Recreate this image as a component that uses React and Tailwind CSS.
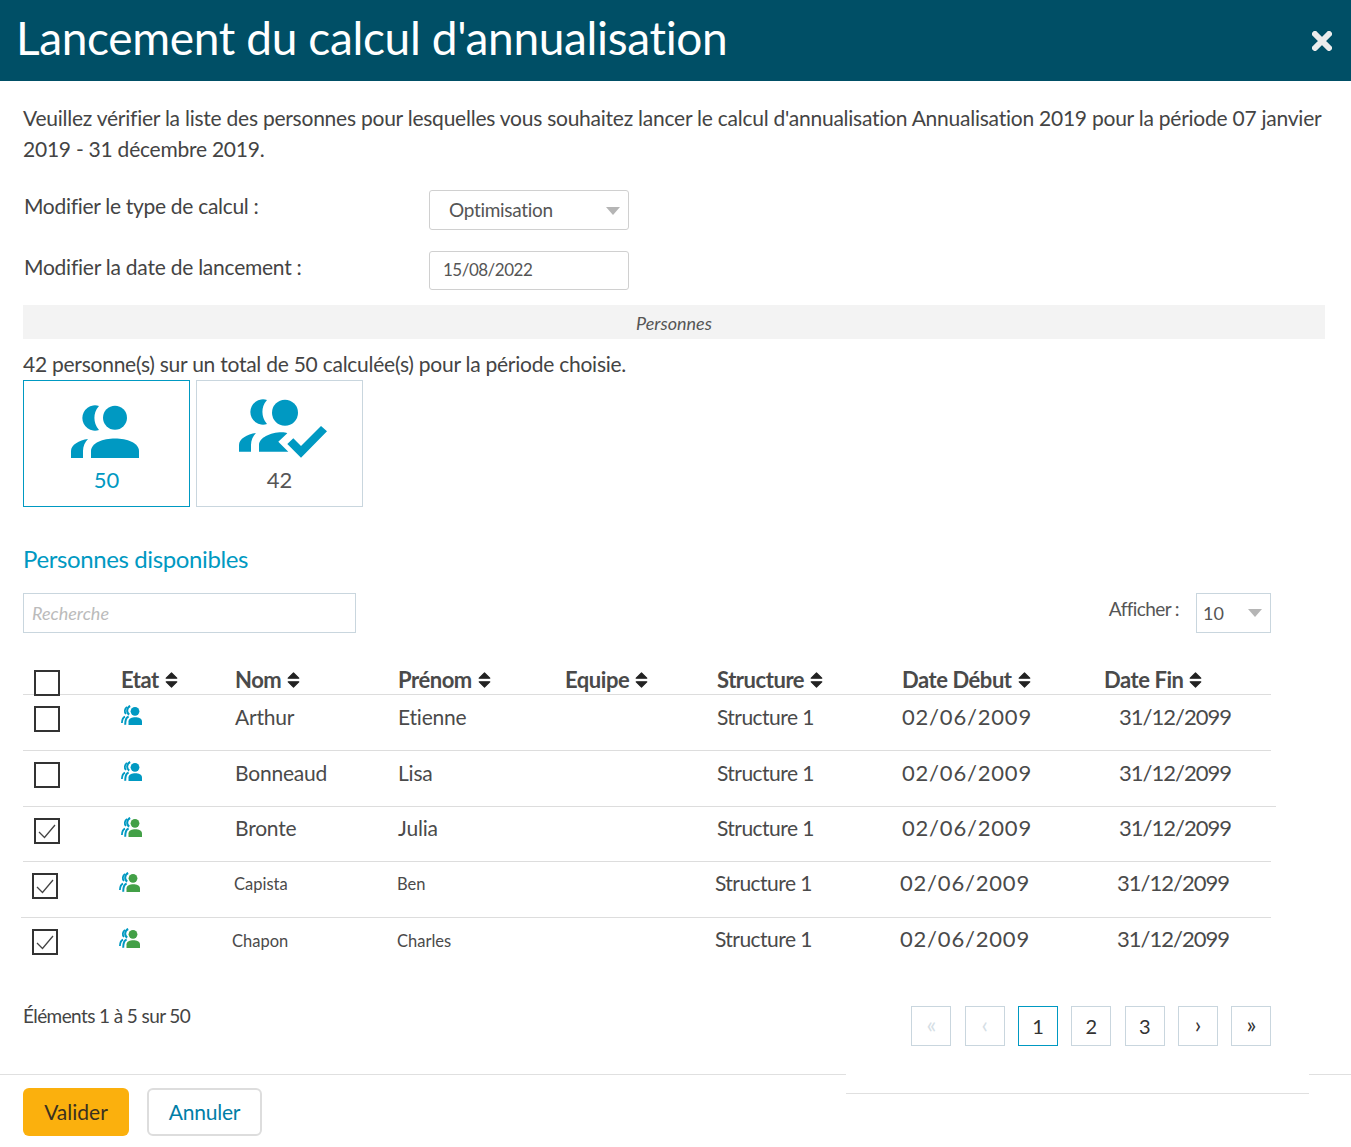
import React from "react";

const Sort = () => (
  <svg width="13" height="16" viewBox="0 0 13 16" className="ml-[6px] shrink-0">
    <path d="M1.2 6.2 L6.5 1 L11.8 6.2 Z M1.2 9.8 L6.5 15 L11.8 9.8 Z" fill="#222" stroke="#222" strokeWidth="1.2" strokeLinejoin="round" />
  </svg>
);

const Arrow = () => (
  <svg width="16" height="10" viewBox="0 0 16 10" className="shrink-0">
    <path d="M1 1 H15 L8 9 Z" fill="#b5b5b5" />
  </svg>
);

const Crescent = () => <path d="M28 1 A12.65 12.65 0 1 0 28 25 A18 18 0 0 1 28 1 Z" fill="#0099c2" />;

const PeopleIcon = () => (
  <svg width="68" height="54" viewBox="0 0 68 54" fill="#0099c2">
    <Crescent />
    <circle cx="44" cy="12.7" r="12" />
    <path d="M20 53 V46 C20 38 32 33.5 44 33.5 S68 38 68 46 V53 Z" />
    <path d="M0 53 V46 C0 40 8 35 17 34 C14 37 12 41 12 46 V53 Z" />
  </svg>
);

const PeopleCheckIcon = () => (
  <svg width="88" height="60" viewBox="0 0 88 60" fill="#0099c2">
    <Crescent />
    <circle cx="46" cy="13.7" r="13" />
    <path d="M20 52.7 V46 C20 39 31 33.3 43 33.3 C45 33.3 47 33.6 48.3 34.3 L39.3 42.7 L49.3 52.7 Z" />
    <path d="M0 52.7 V46 C0 40 8 35 17 34 C14 37 12 41 12 46 V52.7 Z" />
    <path d="M48.3 45 L54.3 39.3 L62 47 L82 27 L88 32.3 L62 58.7 Z" />
  </svg>
);

const StateIcon = ({ color }) => (
  <svg width="21" height="20" viewBox="0 0 21 20" className="shrink-0">
    <path d="M9.2 1 A5 5 0 0 0 8.2 9.6" fill="none" stroke="#0099c2" strokeWidth="2" />
    <path d="M6 2 A4.6 4.6 0 0 0 5 9" fill="none" stroke="#0099c2" strokeWidth="1.8" />
    <path d="M7.6 11.5 C5 12.5 4.2 15.5 4.2 19.8" fill="none" stroke="#0099c2" strokeWidth="2" />
    <path d="M4 11.6 C1.8 12.6 1 15 0.9 18" fill="none" stroke="#0099c2" strokeWidth="1.8" />
    <circle cx="14" cy="6.3" r="4.4" fill={color} />
    <path d="M7.5 20 V16.5 C7.5 13.5 11 12.2 14.3 12.2 S21 13.5 21 16.5 V20 Z" fill={color} />
  </svg>
);

const Check = ({ checked }) => (
  <span className="flex h-[26px] w-[26px] shrink-0 items-center justify-center border-2 border-[#333]">
    {checked && (
      <svg width="20" height="16" viewBox="0 0 20 16">
        <path d="M2 9 L7.5 14.5 L18 2" fill="none" stroke="#444" strokeWidth="1.3" />
      </svg>
    )}
  </span>
);

const cols = "grid grid-cols-[98px_114px_163px_167px_152px_185px_202px_1fr]";

const Head = ({ children }) => (
  <div className="mt-[2px] flex items-center text-[22px] font-bold leading-[28px] tracking-[-0.45px] text-[#4a4a4a]">
    {children}
    <Sort />
  </div>
);

const rows = [
  { nom: "Arthur", pre: "Etienne", color: "#0099c2", pt: "pt-[7px]", small: "", h: "h-[56px]", wrap: "w-[1248px]" },
  { nom: "Bonneaud", pre: "Lisa", color: "#0099c2", pt: "pt-[7px]", small: "", h: "h-[56px]", wrap: "w-[1253px]" },
  { nom: "Bronte", pre: "Julia", color: "#43a047", pt: "pt-[6px]", small: "", checked: true, h: "h-[55px]", wrap: "w-[1248px]" },
  { nom: "Capista", pre: "Ben", color: "#43a047", pt: "pt-[6px]", small: "pt-[8px] text-[16.5px] leading-[28px]", checked: true, h: "h-[56px]", wrap: "w-[1250px] -ml-[2px]", nomClass: "ml-[1px]", preClass: "ml-[1px]" },
  { nom: "Chapon", pre: "Charles", color: "#43a047", pt: "pt-[6px]", small: "pt-[9px] text-[16.5px] leading-[28px]", checked: true, h: "h-[56px]", wrap: "w-[1250px] -ml-[2px]", nomClass: "-ml-[1px]", preClass: "ml-[1px]", last: true },
];

const Row = ({ r }) => {
  const name = r.small || `${r.pt} text-[21px] leading-[30px] tracking-[-0.2px]`;
  return (
    <div className={`${cols} ${r.h} ${r.wrap} ${r.last ? "" : "border-b border-[#dddddd]"} box-border items-start text-[#4a4a4a]`}>
      <div className="pl-[11px] pt-[11px]"><Check checked={r.checked} /></div>
      <div className="pt-[10px]"><StateIcon color={r.color} /></div>
      <div className={`${name} ${r.nomClass || ""}`}>{r.nom}</div>
      <div className={`${name} ${r.preClass || ""}`}>{r.pre}</div>
      <div />
      <div className={`${r.pt} text-[21px] leading-[30px] tracking-[-0.55px]`}>Structure 1</div>
      <div className={`${r.pt} text-[22px] leading-[30px] tracking-[0.8px]`}>02/06/2009</div>
      <div className={`${r.pt} pl-[15px] text-[22px] leading-[30px] tracking-[-1px]`}>31/12/2099</div>
    </div>
  );
};

const Page = ({ children, active, disabled, glyph }) => (
  <span
    className={`flex h-[40px] w-[40px] items-center justify-center border ${glyph ? "pb-[3px] text-[23px]" : "pb-[1px] text-[20px]"} ${
      active ? "border-[#0099c2] text-[#333]" : "border-[#c9d6de] " + (disabled ? "text-[#d5dee5]" : "text-[#333]")
    }`}
  >
    {children}
  </span>
);

export default function App() {
  return (
    <div className="relative h-[1147px] w-[1351px] overflow-hidden bg-white font-['Lato',sans-serif] text-[#444]">
      <header className="flex h-[81px] items-center justify-between bg-[#004f66] pb-[5px] pl-[16px] pr-[19px] text-white">
        <h1 className="text-[46px] font-normal leading-[1] tracking-[-0.35px]">Lancement du calcul d'annualisation</h1>
        <svg width="20" height="20" viewBox="0 0 20 20" className="mt-[5px]">
          <path d="M3 3 L17 17 M17 3 L3 17" stroke="#ececec" strokeWidth="6" strokeLinecap="round" />
        </svg>
      </header>

      <div className="px-[23px]">
        <p className="mt-[21px] w-[1310px] text-[21px] leading-[31px] tracking-[-0.24px] text-[#444]">
          Veuillez vérifier la liste des personnes pour lesquelles vous souhaitez lancer le calcul d'annualisation Annualisation 2019 pour la période 07 janvier 2019 - 31 décembre 2019.
        </p>

        <div className="mt-[26px] flex h-[40px] items-start">
          <label className="w-[406px] pl-[1px] text-[21px] leading-[32px] tracking-[-0.3px]">Modifier le type de calcul :</label>
          <div className="flex h-[40px] w-[200px] items-center justify-between rounded-[3px] border border-[#d0d0d0] pl-[19px] pr-[7px] pt-[1px] text-[19px] tracking-[-0.3px] text-[#555]">
            Optimisation
            <Arrow />
          </div>
        </div>

        <div className="mt-[21px] flex h-[39px] items-start">
          <label className="w-[406px] pl-[1px] text-[21px] leading-[32px] tracking-[-0.24px]">Modifier la date de lancement :</label>
          <div className="flex h-[39px] w-[200px] items-center rounded-[3px] border border-[#d0d0d0] pb-[2px] pl-[13px] text-[17px] tracking-[-0.5px] text-[#555]">15/08/2022</div>
        </div>

        <div className="mt-[15px] flex h-[34px] w-[1302px] items-center justify-center bg-[#f3f3f3] pt-[3px] text-[18px] italic text-[#555]">Personnes</div>

        <p className="mt-[9px] text-[21px] leading-[32px] tracking-[-0.25px]">42 personne(s) sur un total de 50 calculée(s) pour la période choisie.</p>

        <div className="flex gap-[6px]">
          <div className="box-border flex h-[127px] w-[167px] flex-col items-center border border-[#0099c2] pt-[24px] text-[#0099c2]">
            <span className="mr-[3px]"><PeopleIcon /></span>
            <span className="mt-[7px] text-[22px] leading-[28px]">50</span>
          </div>
          <div className="box-border flex h-[127px] w-[167px] flex-col items-center border border-[#c9d6de] pt-[18px] text-[#555]">
            <span className="ml-[7px]"><PeopleCheckIcon /></span>
            <span className="mt-[7px] text-[22px] leading-[28px]">42</span>
          </div>
        </div>

        <h2 className="mt-[34px] text-[24px] font-normal leading-[36px] tracking-[-0.38px] text-[#0099c2]">Personnes disponibles</h2>

        <div className="mt-[16px] flex h-[40px] w-[1248px] items-start">
          <div className="flex h-[40px] w-[333px] items-center border border-[#c9d6de] pl-[8px] text-[18px] italic text-[#bbbbbb]">Recherche</div>
          <div className="flex-1" />
          <span className="mr-[17px] text-[19px] leading-[32px] tracking-[-0.6px] text-[#555]">Afficher :</span>
          <div className="flex h-[40px] w-[75px] items-center justify-between border border-[#c9d6de] pl-[6px] pr-[7px] text-[18px] text-[#555]">
            10
            <Arrow />
          </div>
        </div>

        <div className={`${cols} mt-[31px] box-border h-[31px] w-[1248px] items-start border-b border-[#dddddd]`}>
          <div className="pl-[11px] pt-[6px]"><Check /></div>
          <Head>Etat</Head>
          <Head>Nom</Head>
          <Head>Prénom</Head>
          <Head>Equipe</Head>
          <Head>Structure</Head>
          <Head>Date Début</Head>
          <Head>Date Fin</Head>
        </div>

        {rows.map((r) => <Row key={r.nom} r={r} />)}

        <div className="flex items-start">
          <span className="mt-[28px] text-[19px] leading-[28px] tracking-[-0.6px]">Éléments 1 à 5 sur 50</span>
        </div>
      </div>

      <footer className="absolute bottom-0 left-0 right-0 h-[73px] border-t border-[#e0e0e0] pl-[23px] pt-[13px]">
        <div className="flex items-start gap-[18px]">
          <button className="h-[48px] w-[106px] rounded-[6px] bg-[#fbb00d] text-[21px] text-[#3a3020]">Valider</button>
          <button className="h-[48px] w-[115px] rounded-[6px] border-2 border-[#dddddd] bg-white text-[21px] tracking-[-0.2px] text-[#007ea7]">Annuler</button>
        </div>
      </footer>

      <div className="absolute left-[846px] top-[1006px] z-10 flex h-[88px] w-[463px] items-start justify-between border-b border-[#e0e0e0] bg-white pl-[65.4px] pr-[37.6px]">
        <Page disabled glyph>«</Page>
        <Page disabled glyph>‹</Page>
        <Page active>1</Page>
        <Page>2</Page>
        <Page>3</Page>
        <Page glyph>›</Page>
        <Page glyph>»</Page>
      </div>
    </div>
  );
}
